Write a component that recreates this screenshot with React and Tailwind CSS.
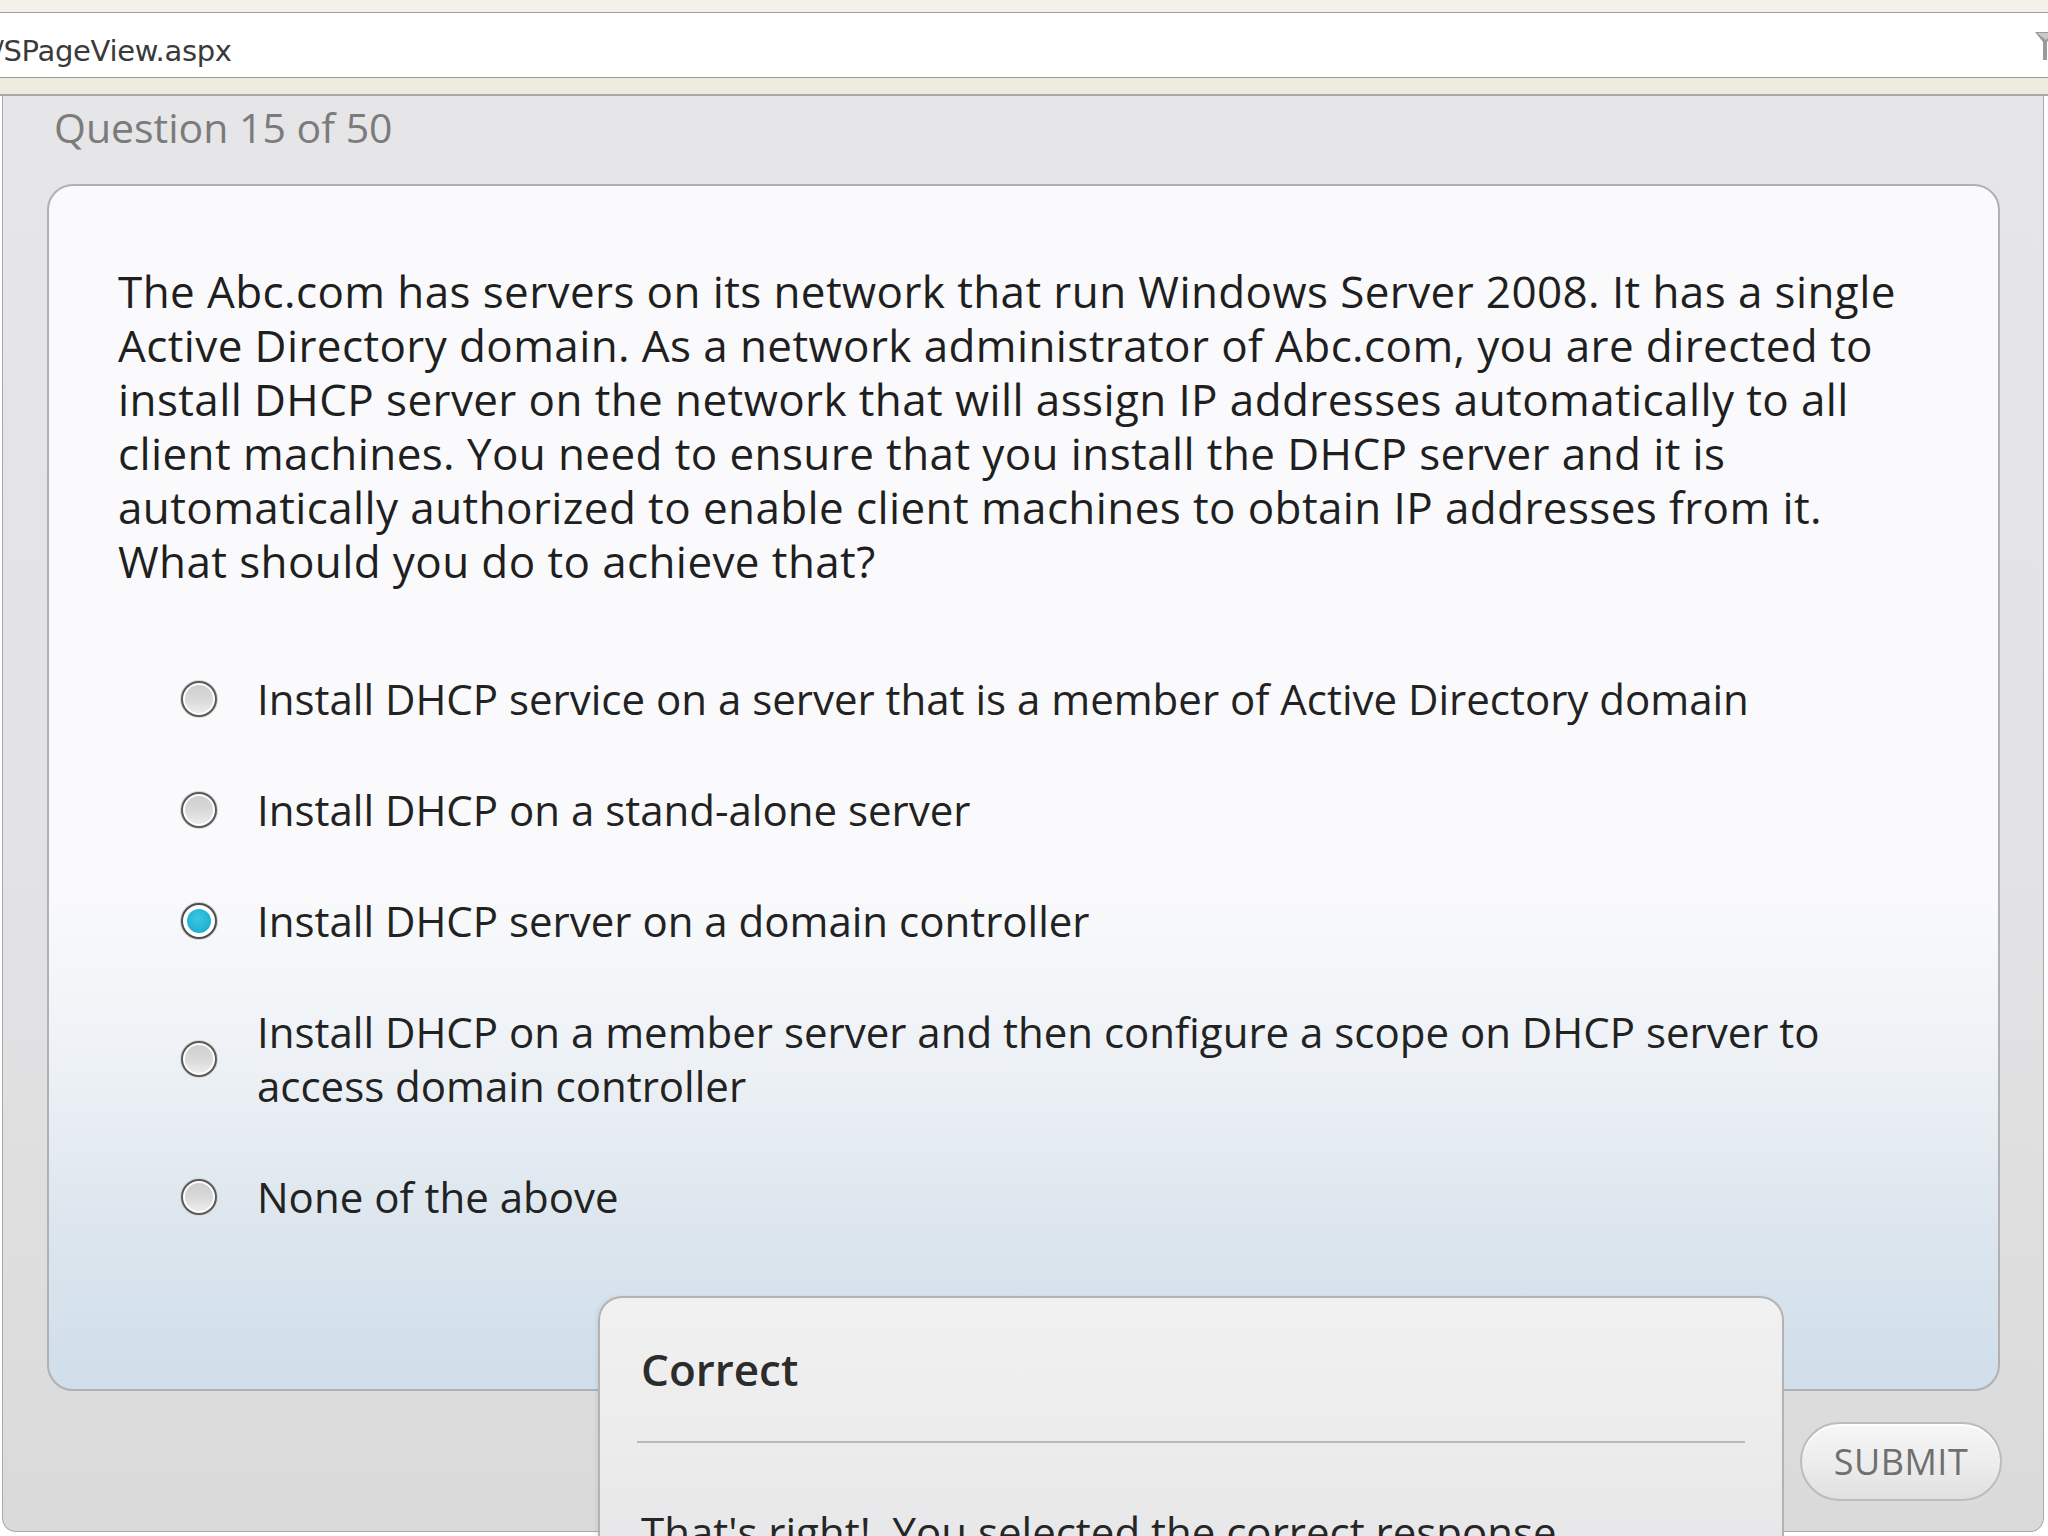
import React from "react";

function Radio({ checked }) {
  if (checked) {
    return (
      <span className="flex h-[36px] w-[36px] shrink-0 items-center justify-center rounded-full border-2 border-[#4f4f4f] bg-white shadow-[0_0_0_1px_#cfcfcf]">
        <span className="h-[24px] w-[24px] rounded-full bg-[radial-gradient(circle_at_45%_40%,#3cc6e2_0%,#1cb2d2_70%,#1aa6c6_100%)]" />
      </span>
    );
  }
  return (
    <span className="flex h-[36px] w-[36px] shrink-0 items-center justify-center rounded-full border-2 border-[#5a5a5a] bg-white shadow-[0_0_0_1px_#d6d6d6]">
      <span className="h-[28px] w-[28px] rounded-full bg-[linear-gradient(to_bottom,#cfcfcf_0%,#d9d9d9_50%,#ececec_100%)]" />
    </span>
  );
}

const options = [
  { lines: ["Install DHCP service on a server that is a member of Active Directory domain"] },
  { lines: ["Install DHCP on a stand-alone server"] },
  { lines: ["Install DHCP server on a domain controller"], checked: true },
  {
    lines: [
      "Install DHCP on a member server and then configure a scope on DHCP server to",
      "access domain controller",
    ],
  },
  { lines: ["None of the above"] },
];

const question = [
  "The Abc.com has servers on its network that run Windows Server 2008. It has a single",
  "Active Directory domain. As a network administrator of Abc.com, you are directed to",
  "install DHCP server on the network that will assign IP addresses automatically to all",
  "client machines. You need to ensure that you install the DHCP server and it is",
  "automatically authorized to enable client machines to obtain IP addresses from it.",
  "What should you do to achieve that?",
];

export default function App() {
  return (
    <div className="relative h-[1536px] w-[2048px] overflow-hidden bg-white font-['Open_Sans',sans-serif]">
      {/* browser chrome */}
      <div className="h-[13px] border-b border-[#9e9e9e] bg-[#f3f1ea]" />
      <div className="flex h-[64px] items-center justify-between overflow-hidden bg-white">
        <span className="-ml-[6px] mt-[12px] font-['DejaVu_Sans',sans-serif] text-[29px] leading-none tracking-[-0.3px] text-[#3a3a3a]">
          /SPageView.aspx
        </span>
        <svg width="22" height="32" viewBox="0 0 22 32" className="-mr-[8px] mt-[2px]">
          <path d="M1 2 L21 2 L13 12 L13 30 L9 30 L9 12 Z" fill="#9a9a9a" />
          <path d="M3 3 L19 3 L12 10 Z" fill="#c8c8c8" />
        </svg>
      </div>
      <div className="h-[19px] border-t border-b-2 border-t-[#9a9a9a] border-b-[#a8a8a8] bg-[#ecebe0]" />

      {/* main panel */}
      <div className="ml-[2px] flex h-[1436px] w-[2042px] flex-col rounded-b-[14px] border-x border-b border-[#a9a9a9] bg-[linear-gradient(to_bottom,#e6e6e8_0%,#e2e2e4_60%,#dadada_100%)] pt-[4px]">
        <div className="pl-[51px] text-[41px] leading-[54px] text-[#7b7b7b]">Question 15 of 50</div>

        <div className="ml-[44px] mt-[30px] h-[1207px] w-[1953px] rounded-[26px] border-2 border-[#b1b1b3] bg-[linear-gradient(to_bottom,#fafafc_0%,#fafafc_58%,#eef2f6_72%,#dde6ee_86%,#cfdeea_100%)] pl-[69px] pt-[78px] text-[#1f1f1f]">
          <div className="whitespace-nowrap text-[44px] leading-[54px] tracking-[0.4px]">
            {question.map((l, i) => (
              <div key={i}>{l}</div>
            ))}
          </div>

          <div className="ml-[63px] mt-[84px] flex flex-col gap-[57px]">
            {options.map((o, i) => (
              <div key={i} className="flex items-center gap-[40px]">
                <Radio checked={o.checked} />
                <div className="whitespace-nowrap text-[42px] leading-[54px] text-[#222]">
                  {o.lines.map((l, j) => (
                    <div key={j}>{l}</div>
                  ))}
                </div>
              </div>
            ))}
          </div>
        </div>

        <div className="mr-[41px] mt-[31px] flex justify-end">
          <div className="flex h-[79px] w-[202px] items-center justify-center rounded-full border-2 border-[#bcbcbc] bg-[linear-gradient(to_bottom,#f6f6f6_0%,#ececec_55%,#e0e0e0_100%)] text-[36px] tracking-[0.5px] text-[#6f6f6f] shadow-[inset_0_2px_0_#ffffff]">
            SUBMIT
          </div>
        </div>
      </div>

      {/* feedback popup */}
      <div className="absolute left-[598px] top-[1296px] h-[280px] w-[1186px] rounded-t-[24px] border-2 border-b-0 border-[#b3b3b3] bg-[linear-gradient(to_bottom,#f1f1f1_0%,#ececed_50%,#e6e6e8_100%)] pt-[43px] shadow-[-2px_0_4px_rgba(0,0,0,0.06)]">
        <div className="pl-[41px] text-[44px] font-semibold leading-[56px] text-[#2c2c2c]">Correct</div>
        <div className="ml-[37px] mt-[44px] h-[2px] w-[1108px] bg-[#b9b9b9]" />
        <div className="mt-[62px] whitespace-nowrap pl-[41px] text-[42px] leading-[54px] text-[#262626]">
          That's right!&nbsp; You selected the correct response.
        </div>
      </div>
    </div>
  );
}
